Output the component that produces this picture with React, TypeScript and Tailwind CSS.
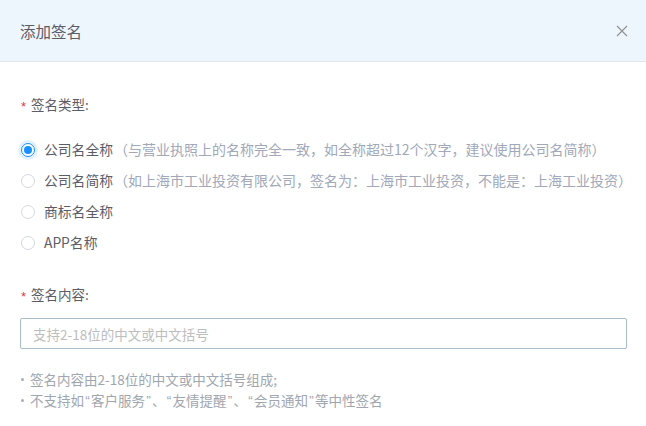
function Q({ children }: { children: string }) {
  return (
    <span className="inline-block w-[7px] text-center font-['Liberation_Sans',sans-serif]">{children}</span>
  );
}

function Required() {
  return (
    <span className="mr-[5px] ml-px pt-[5px] font-['Liberation_Sans',sans-serif] text-[13px] leading-none text-[#e4393c]">
      *
    </span>
  );
}

export default function App() {
  const options = [
    {
      label: "公司名全称",
      hint: "（与营业执照上的名称完全一致，如全称超过12个汉字，建议使用公司名简称）",
      checked: true,
    },
    {
      label: "公司名简称",
      hint: "（如上海市工业投资有限公司，签名为：上海市工业投资，不能是：上海工业投资）",
      checked: false,
    },
    { label: "商标名全称", hint: "", checked: false },
    { label: "APP名称", hint: "", checked: false },
  ];

  return (
    <div className="h-[426px] w-[646px] overflow-hidden bg-white font-['Noto_Sans_CJK_SC',sans-serif] text-[#5c5c66]">
      {/* Header */}
      <div className="flex h-[62px] items-center justify-between border-b border-[#e1e7ee] bg-[#edf5fd] pl-5 pr-[16px]">
        <h2 className="text-[15.5px] leading-5 text-[#5c5c66]">添加签名</h2>
        <button aria-label="关闭" className="flex h-4 w-4 items-center justify-center">
          <svg width="12" height="12" viewBox="0 0 12 12" fill="none">
            <path d="M1 1L11 11M11 1L1 11" stroke="#909090" strokeWidth="1.1" />
          </svg>
        </button>
      </div>

      <div className="px-5 pt-8">
        {/* 签名类型 */}
        <div className="flex h-5 items-center text-[13.5px]">
          <Required />
          <span>签名类型:</span>
        </div>

        <div className="mt-5 flex flex-col">
          {options.map((o) => (
            <label key={o.label} className="flex h-[31px] items-center whitespace-nowrap text-[13.8px]">
              {o.checked ? (
                <span className="ml-px flex h-[14px] w-[14px] shrink-0 items-center justify-center rounded-full border border-[#1890ff] bg-white shadow-[0_0_0_3px_#e3f0fe]">
                  <span className="h-[8px] w-[8px] rounded-full bg-[#1890ff]" />
                </span>
              ) : (
                <span className="ml-px h-[14px] w-[14px] shrink-0 rounded-full border border-[#d3d7dd] bg-white" />
              )}
              <span className="ml-[9px] shrink-0">{o.label}</span>
              {o.hint && <span className="ml-px text-[14px] text-[#a0a8b9]">{o.hint}</span>}
            </label>
          ))}
        </div>

        {/* 签名内容 */}
        <div className="mt-[26px] flex h-5 items-center text-[13.5px]">
          <Required />
          <span>签名内容:</span>
        </div>

        <input
          type="text"
          placeholder="支持2-18位的中文或中文括号"
          className="mt-[14px] block h-[31px] w-[607px] rounded-[2px] border border-[#a9bccb] px-3 text-[13.5px] text-[#555] outline-none placeholder:text-[#bdbdbd]"
        />

        <ul className="mt-[20px] text-[13.5px] leading-[21px] text-[#a0a6b0]">
          <li className="flex items-center">
            <span className="mr-[6px] ml-px h-[3px] w-[3px] rounded-full bg-[#a9aeb6]" />
            签名内容由2-18位的中文或中文括号组成;
          </li>
          <li className="flex items-center">
            <span className="mr-[6px] ml-px h-[3px] w-[3px] rounded-full bg-[#a9aeb6]" />
            不支持如<Q>“</Q>客户服务<Q>”</Q>、<Q>“</Q>友情提醒<Q>”</Q>、<Q>“</Q>会员通知<Q>”</Q>等中性签名
          </li>
        </ul>
      </div>
    </div>
  );
}
